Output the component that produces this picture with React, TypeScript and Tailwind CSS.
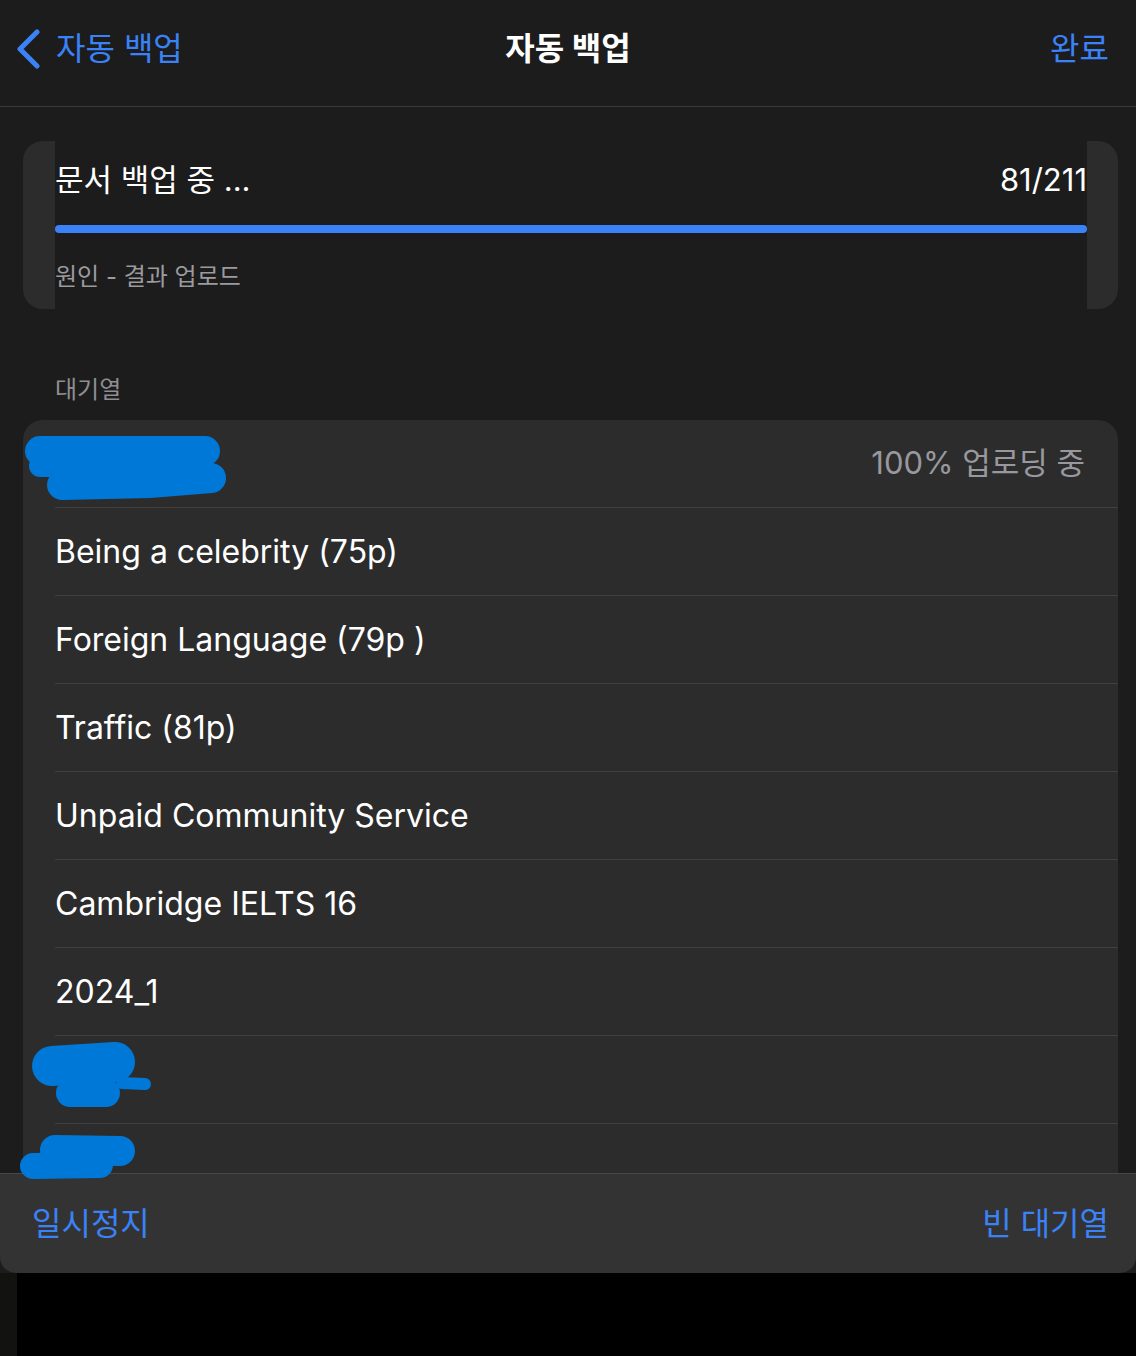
const KR = "font-['Inter','Noto_Sans_CJK_KR',sans-serif]";

const queue = [
  "",
  "Being a celebrity (75p)",
  "Foreign Language (79p )",
  "Traffic (81p)",
  "Unpaid Community Service",
  "Cambridge IELTS 16",
  "2024_1",
  "",
  "",
];

const Chevron = () => (
  <svg width="26" height="40" viewBox="0 0 26 40" fill="none">
    <path d="M21 3 L4 20 L21 37" stroke="#3a82f6" strokeWidth="5" strokeLinecap="round" strokeLinejoin="round" />
  </svg>
);

// blue marker scribbles that hide some titles in the screenshot
const Scribbles = () => (
  <svg className="pointer-events-none absolute left-0 top-0" width="1136" height="1356" viewBox="0 0 1136 1356" fill="none">
    <g stroke="#0078d7" strokeLinecap="round">
      <path d="M40 451 L205 451" strokeWidth="30" />
      <path d="M40 466 L200 466" strokeWidth="22" />
      <path d="M62 485 L150 483 L211 478" strokeWidth="30" />
      <path d="M52 1066 L115 1062" strokeWidth="40" />
      <path d="M70 1093 L106 1093" strokeWidth="28" />
      <path d="M122 1083 L145 1084" strokeWidth="12" />
      <path d="M55 1150 L120 1151" strokeWidth="30" />
      <path d="M33 1166 L100 1165" strokeWidth="26" />
    </g>
  </svg>
);

export default function App() {
  return (
    <div className={`relative flex h-[1356px] w-[1136px] flex-col overflow-hidden bg-black ${KR}`}>
      <div className="flex h-[1273px] flex-col bg-[#1c1c1c]">
        <header className="grid h-[107px] shrink-0 grid-cols-[1fr_auto_1fr] items-center border-b border-[#3a3a3a] pb-[8px]">
          <div className="flex items-center gap-[14px] pl-[16px] text-[32px] text-[#3a82f6]">
            <Chevron />
            <span>자동 백업</span>
          </div>
          <h1 className="text-[32px] font-bold text-white">자동 백업</h1>
          <div className="pr-[27px] text-right text-[32px] text-[#3a82f6]">완료</div>
        </header>

        <div className="flex min-h-0 flex-1 flex-col overflow-hidden pl-[23px] pr-[18px]">
          <section className="mt-[34px] h-[168px] shrink-0 rounded-[20px] bg-[#2c2c2c] px-[32px] pr-[31px]">
            <div className="flex h-full flex-col bg-[#1c1c1c]">
              <div className="mt-[19px] flex items-center justify-between text-[31px] leading-[40px] text-white">
                <span>문서 백업 중 ...</span>
                <span>81/211</span>
              </div>
              <div className="mt-[25px] h-[8px] rounded-full bg-[#3a82f6]" />
              <div className="mt-[28px] text-[24px] leading-[32px] text-[#9a9a9f]">원인 - 결과 업로드</div>
            </div>
          </section>

          <div className="shrink-0 pb-[14px] pl-[32px] pt-[65px] text-[24px] leading-[32px] text-[#8e8e93]">대기열</div>

          <div className="shrink-0 rounded-t-[20px] bg-[#2c2c2c]">
            {queue.map((title, i) => (
              <div key={i} className="pl-[32px]">
                <div
                  className={`flex h-[88px] items-center justify-between pr-[33px] text-[32px] text-white ${
                    i < queue.length - 1 ? "border-b border-[#404040]" : ""
                  }`}
                >
                  <span>{title}</span>
                  {i === 0 && <span className="text-[31px] text-[#98989e]">100% 업로딩 중</span>}
                </div>
              </div>
            ))}
          </div>
        </div>

        <footer className="flex h-[100px] shrink-0 items-center justify-between rounded-b-[16px] border-t border-[#474747] bg-[#333333] pl-[32px] pr-[27px] text-[32px] text-[#3a82f6]">
          <span>일시정지</span>
          <span>빈 대기열</span>
        </footer>
      </div>
      <div className="flex flex-1">
        <div className="w-[17px] bg-[#121210]" />
        <div className="flex-1 bg-black" />
      </div>
      <Scribbles />
    </div>
  );
}
